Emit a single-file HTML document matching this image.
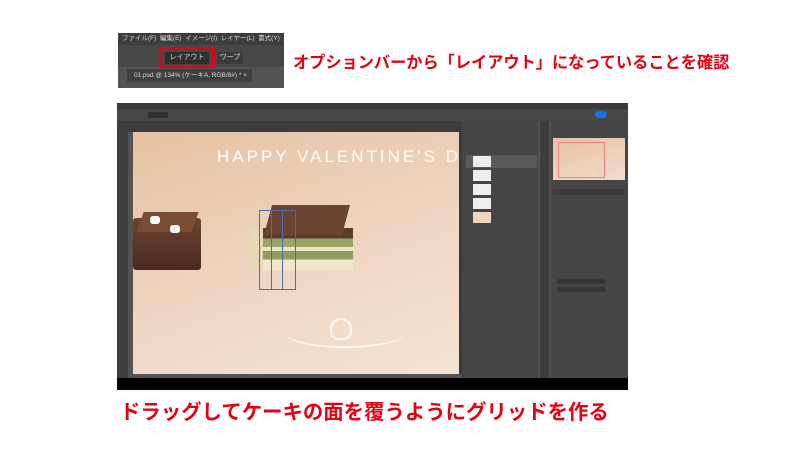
<!DOCTYPE html>
<html><head><meta charset="utf-8"><style>
*{margin:0;padding:0;box-sizing:border-box}
body{width:800px;height:450px;background:#fff;position:relative;overflow:hidden;font-family:"Liberation Sans","Noto Sans CJK JP",sans-serif}
.a{position:absolute}
.cap{color:#e60012;font-weight:bold;white-space:nowrap}
</style></head><body>
<div class="a" style="left:118px;top:33px;width:166px;height:55px;background:#535353"></div>
<div class="a" style="left:118px;top:33px;width:166px;height:12px;background:#3c3c3c;color:#ddd;font-size:6.5px;line-height:12px;padding-left:4px;white-space:nowrap;overflow:hidden">ファイル(F)&nbsp; 編集(E)&nbsp; イメージ(I)&nbsp; レイヤー(L)&nbsp; 書式(Y)&nbsp; 選択</div>
<div class="a" style="left:118px;top:45px;width:166px;height:22px;background:#474747"></div>
<div class="a" style="left:159px;top:47px;width:56px;height:21px;border:3px solid #e60012"></div>
<div class="a" style="left:165px;top:52px;width:44px;height:12px;background:#2f2f2f;color:#ddd;font-size:7px;line-height:12px;text-align:center">レイアウト</div>
<div class="a" style="left:217px;top:52px;width:26px;height:12px;background:#3a3a3a;color:#ddd;font-size:7px;line-height:12px;text-align:center">ワープ</div>
<div class="a" style="left:127px;top:69px;width:125px;height:13px;background:#3f3f3f;color:#ddd;font-size:6.5px;line-height:13px;padding-left:7px;white-space:nowrap">01.psd @ 134% (ケーキA, RGB/8#) * ×</div>
<div class="a cap" style="left:293px;top:49px;font-size:16.2px">オプションバーから「レイアウト」になっていることを確認</div>

<div class="a" style="left:117px;top:103px;width:511px;height:287px;background:#535353"></div>
<div class="a" style="left:117px;top:103px;width:511px;height:6px;background:#3a3a3a"></div>
<div class="a" style="left:117px;top:109px;width:511px;height:12px;background:#474747"></div>
<div class="a" style="left:148px;top:112px;width:20px;height:6px;background:#2f2f2f"></div>
<div class="a" style="left:595px;top:111px;width:12px;height:7px;background:#1473e6;border-radius:4px"></div>
<div class="a" style="left:117px;top:121px;width:11px;height:257px;background:#3c3c3c"></div>
<div class="a" style="left:128px;top:121px;width:334px;height:11px;background:#3c3c3c"></div>
<div class="a" style="left:133px;top:132px;width:326px;height:242px;background:linear-gradient(160deg,#e6c2a4 0%,#efd6c2 55%,#f4e3d4 100%)"></div>
<div class="a" style="left:217px;top:147px;color:#fff;font-size:17px;letter-spacing:3px;white-space:nowrap">HAPPY VALENTINE'S D</div>
<div class="a" style="left:133px;top:218px;width:68px;height:52px;background:linear-gradient(#6b4330,#4a2a20);border-radius:3px"></div>
<div class="a" style="left:140px;top:212px;width:55px;height:20px;background:#7a4d33;transform:skewX(-20deg)"></div>
<div class="a" style="left:150px;top:216px;width:10px;height:8px;background:#fff;border-radius:3px"></div>
<div class="a" style="left:170px;top:225px;width:10px;height:8px;background:#f4f4f4;border-radius:3px"></div>
<div class="a" style="left:250px;top:228px;width:20px;height:42px;background:#e8d8b8"></div>
<div class="a" style="left:263px;top:228px;width:90px;height:42px;background:linear-gradient(#5b3d2c 0 25%,#9aa668 25% 45%,#ece3c4 45% 55%,#8f9c5c 55% 75%,#efe8cc 75%)"></div>
<div class="a" style="left:268px;top:205px;width:78px;height:30px;background:#6b4533;transform:skewX(-15deg)"></div>
<div class="a" style="left:259px;top:210px;width:37px;height:80px;border:1px solid #4a6fb0"></div>
<div class="a" style="left:271px;top:210px;width:12px;height:80px;border-left:1px solid #4a6fb0;border-right:1px solid #4a6fb0"></div>
<div class="a" style="left:285px;top:318px;width:120px;height:30px;border-bottom:2px solid #fff;border-radius:50%;opacity:.8"></div>
<div class="a" style="left:330px;top:318px;width:22px;height:22px;border:2px solid #fff;border-radius:50% 50% 40% 40%;opacity:.8"></div>
<div class="a" style="left:459px;top:132px;width:3px;height:242px;background:#3a3a3a"></div>
<div class="a" style="left:462px;top:121px;width:76px;height:257px;background:#454545"></div>
<div class="a" style="left:466px;top:155px;width:71px;height:13px;background:#5a5a5a"></div>
<div class="a" style="left:473px;top:156px;width:18px;height:11px;background:#eee"></div>
<div class="a" style="left:473px;top:170px;width:18px;height:11px;background:#eee"></div>
<div class="a" style="left:473px;top:184px;width:18px;height:11px;background:#eee"></div>
<div class="a" style="left:473px;top:198px;width:18px;height:11px;background:#eee"></div>
<div class="a" style="left:473px;top:212px;width:18px;height:11px;background:#efd6c0"></div>
<div class="a" style="left:540px;top:121px;width:9px;height:257px;background:#3c3c3c"></div>
<div class="a" style="left:551px;top:121px;width:77px;height:257px;background:#454545"></div>
<div class="a" style="left:553px;top:138px;width:72px;height:42px;background:linear-gradient(160deg,#e6c2a4,#f1dccb)"></div>
<div class="a" style="left:558px;top:142px;width:47px;height:36px;border:1px solid #f08080"></div>
<div class="a" style="left:553px;top:189px;width:72px;height:6px;background:#3a3a3a"></div>
<div class="a" style="left:557px;top:279px;width:48px;height:5px;background:#363636"></div>
<div class="a" style="left:557px;top:287px;width:48px;height:5px;background:#363636"></div>
<div class="a" style="left:117px;top:378px;width:511px;height:12px;background:#000"></div>
<div class="a cap" style="left:120px;top:395px;font-size:20.4px">ドラッグしてケーキの面を覆うようにグリッドを作る</div>
</body></html>
